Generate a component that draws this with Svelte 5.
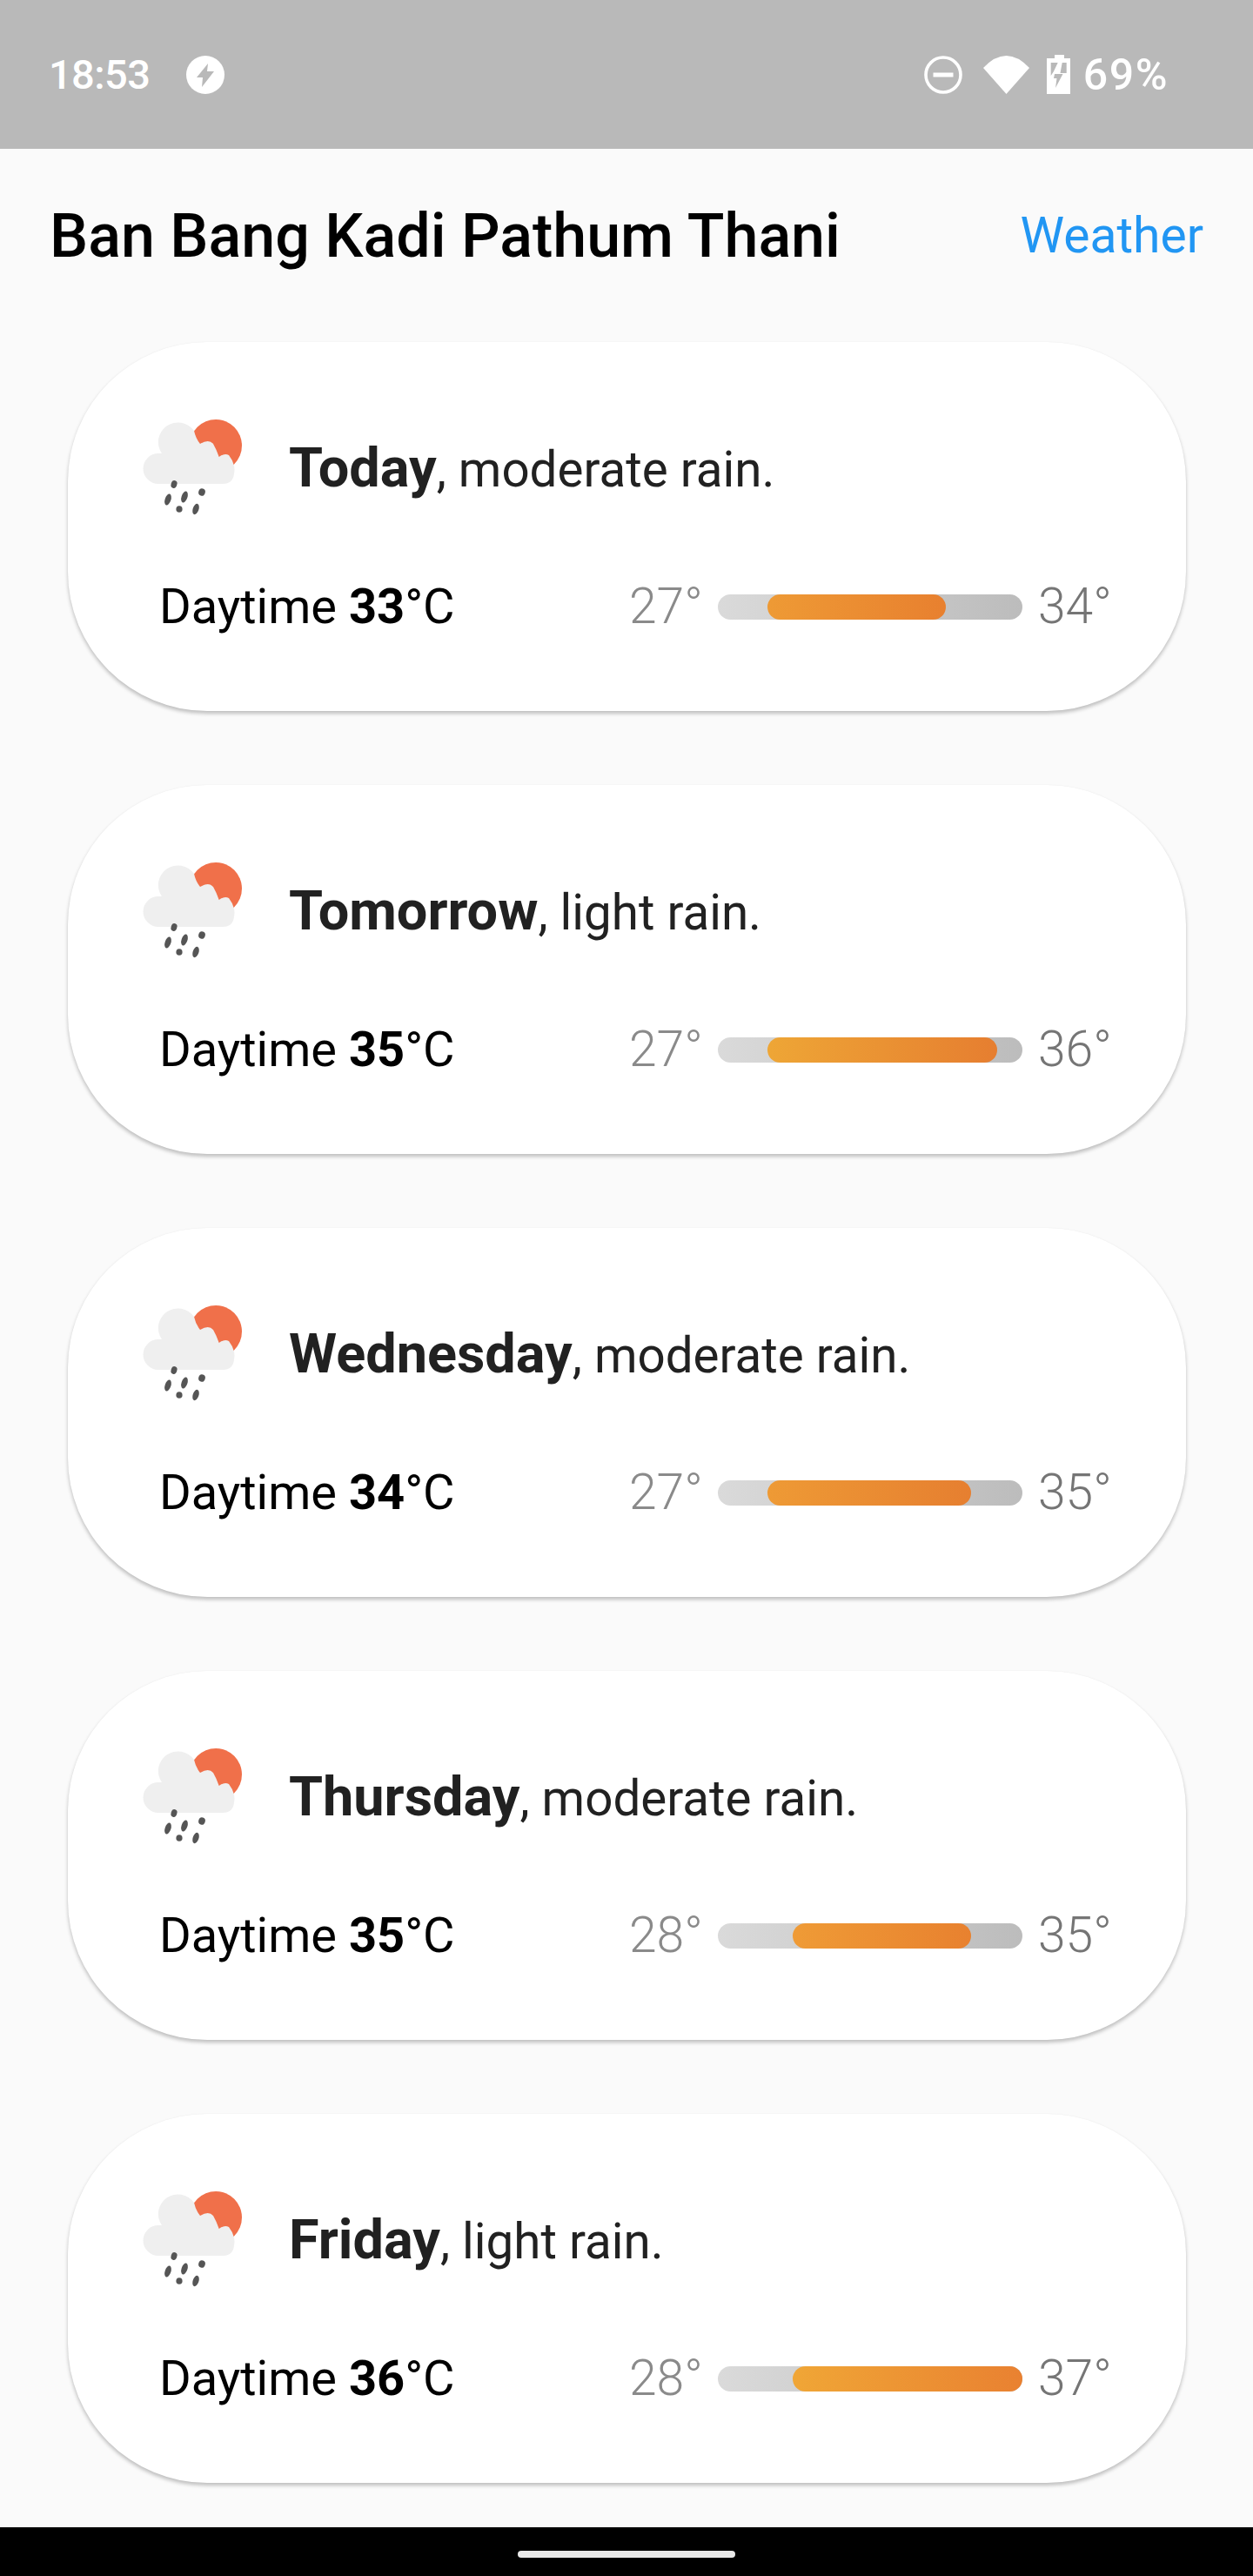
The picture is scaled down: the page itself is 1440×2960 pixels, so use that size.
<script>
  const days = [
    { name: 'Today', desc: ', moderate rain.', day: 33, low: 27, high: 34, from: '#ee9a35', to: '#e8802f' },
    { name: 'Tomorrow', desc: ', light rain.', day: 35, low: 27, high: 36, from: '#eea636', to: '#e67e30' },
    { name: 'Wednesday', desc: ', moderate rain.', day: 34, low: 27, high: 35, from: '#ee9a35', to: '#e67f30' },
    { name: 'Thursday', desc: ', moderate rain.', day: 35, low: 28, high: 35, from: '#ef9b36', to: '#e8812f' },
    { name: 'Friday', desc: ', light rain.', day: 36, low: 28, high: 37, from: '#f0a636', to: '#e98131' }
  ];
  const left = (t) => ((57 + (t - 27) * 29.3) / 350) * 100;
  const right = (t) => ((37 - t) * 29.3 / 350) * 100;
</script>

<div class="screen">
  <header class="status">
    <div class="status-left">
      <span class="time">18:53</span>
      <svg class="amp" viewBox="0 0 44 44" aria-hidden="true">
        <circle cx="22" cy="22" r="22" fill="#fff" />
        <path d="M25 9 L12 25 H19 L18 36 L32 18 H24 Z" fill="#b9b9b9" />
      </svg>
    </div>
    <div class="status-right">
      <svg class="dnd" viewBox="0 0 44 44" aria-hidden="true">
        <circle cx="22" cy="22" r="20" fill="none" stroke="#fff" stroke-width="3.6" />
        <rect x="10.5" y="19.5" width="23" height="5" fill="#fff" />
      </svg>
      <svg class="wifi" viewBox="0 0 53 44" aria-hidden="true">
        <path d="M0 14 Q26.5 -14 53 14 L26.5 44 Z" fill="#fff" />
      </svg>
      <svg class="batt" viewBox="0 0 27 45" aria-hidden="true">
        <path d="M9 0 H20 V4 H27 V45 H0 V4 H9 Z" fill="#fff" />
        <path d="M4.7 9 H12.7 L8 19 L4.7 24 Z M17.7 9 H22.7 V21 H15.5 Z M9 22 H18.5 L10 38 L11.5 27 H8 Z" fill="#b9b9b9" />
      </svg>
      <span class="pct">69%</span>
    </div>
  </header>

  <main class="content">
    <div class="topbar">
      <h1>Ban Bang Kadi Pathum Thani</h1>
      <span class="link">Weather</span>
    </div>

    <div class="cards">
      {#each days as d}
        <section class="card">
          <div class="headline">
            <svg class="wx" viewBox="0 0 122 122" aria-hidden="true">
              <circle cx="88" cy="32" r="30" fill="#f0704a" />
              <path d="M22 76 A17.5 17.5 0 0 1 22 41 L26 41 A21 21 0 0 1 63 15 Q65 24 70 30 Q80 24 85 30 Q89 37 91.7 45 Q98 40 103 43 Q107 48 109 55 Q110 60 109 64 Q108 76 96 76 Z" fill="#efefef" />
              <g fill="#555">
                <ellipse cx="40" cy="76.5" rx="3.4" ry="4.4" transform="rotate(18 40 76.5)" />
                <ellipse cx="33" cy="94" rx="3.4" ry="6.8" transform="rotate(18 33 94)" />
                <ellipse cx="52" cy="91" rx="3.4" ry="6.8" transform="rotate(18 52 91)" />
                <ellipse cx="72" cy="85.5" rx="3.8" ry="4.2" transform="rotate(18 72 85.5)" />
                <ellipse cx="46" cy="105" rx="3.6" ry="3.8" />
                <ellipse cx="65" cy="105" rx="3.4" ry="6.4" transform="rotate(18 65 105)" />
              </g>
            </svg>
            <p class="summary"><strong>{d.name}</strong>{d.desc}</p>
          </div>
          <div class="details">
            <span class="daytime">Daytime <strong>{d.day}</strong>°C</span>
            <div class="range">
              <span class="lo">{d.low}°</span>
              <div class="track">
                <div class="fill" style="left:{left(d.low)}%;right:{right(d.high)}%;background:linear-gradient(90deg,{d.from},{d.to})"></div>
              </div>
              <span class="hi">{d.high}°</span>
            </div>
          </div>
        </section>
      {/each}
    </div>
  </main>

  <footer class="nav"><span class="pill"></span></footer>
</div>

<style>
  :global(body) {
    margin: 0;
  }
  .screen {
    width: 1440px;
    height: 2960px;
    display: flex;
    flex-direction: column;
    background: #fafafa;
    font-family: Roboto, "Liberation Sans", sans-serif;
    overflow: hidden;
  }
  .status {
    height: 171px;
    flex: none;
    background: #b9b9b9;
    color: #fff;
    display: flex;
    justify-content: space-between;
    align-items: center;
    padding: 0 97px 0 56px;
    box-sizing: border-box;
  }
  .status-left,
  .status-right {
    display: flex;
    align-items: center;
  }
  .time {
    font-size: 47px;
    font-weight: 500;
    line-height: 50px;
    letter-spacing: -0.6px;
  }
  .pct {
    font-size: 50px;
    font-weight: 500;
    line-height: 50px;
    letter-spacing: 1.5px;
    margin-left: 15px;
  }
  .amp {
    width: 44px;
    height: 44px;
    margin-left: 42px;
  }
  .dnd {
    width: 44px;
    height: 44px;
  }
  .wifi {
    width: 53px;
    height: 44px;
    margin-left: 24px;
  }
  .batt {
    width: 27px;
    height: 45px;
    margin-left: 20px;
  }
  .content {
    flex: 1;
    min-height: 0;
  }
  .topbar {
    height: 222px;
    box-sizing: border-box;
    padding: 0 57px;
    display: flex;
    justify-content: space-between;
    align-items: flex-start;
  }
  h1 {
    margin: 0;
    padding-top: 58px;
    font-size: 70px;
    line-height: 84px;
    font-weight: 500;
    color: #000;
  }
  .link {
    padding-top: 62px;
    font-size: 57px;
    line-height: 76px;
    font-weight: 400;
    color: #2196f3;
  }
  .cards {
    display: flex;
    flex-direction: column;
    gap: 85px;
    padding: 0 77px 0 78px;
  }
  .card {
    height: 424px;
    box-sizing: border-box;
    background: #fff;
    border-radius: 160px;
    box-shadow: 0 3px 4px rgba(0, 0, 0, 0.24), 0 0 1px rgba(0, 0, 0, 0.05);
    padding: 87px 88px 0 105px;
  }
  .headline {
    display: flex;
    align-items: center;
    height: 122px;
    margin-left: -23px;
  }
  .wx {
    width: 122px;
    height: 122px;
    flex: none;
  }
  .summary {
    margin: 0 0 4px 50px;
    font-size: 56.5px;
    line-height: 64px;
    color: #212121;
    font-weight: 400;
  }
  .summary strong {
    font-size: 63px;
    font-weight: 700;
  }
  .details {
    display: flex;
    align-items: center;
    justify-content: space-between;
    margin-top: 63px;
  }
  .daytime {
    font-size: 56px;
    line-height: 64px;
    color: #000;
  }
  .daytime strong {
    font-weight: 700;
  }
  .range {
    display: flex;
    align-items: center;
    font-size: 57px;
    line-height: 64px;
    font-weight: 300;
    color: #757575;
  }
  .lo {
    color: #8a8a8a;
    width: 102px;
  }
  .hi {
    width: 82px;
    margin-left: 18px;
  }
  .track {
    position: relative;
    width: 350px;
    height: 29px;
    border-radius: 14.5px;
    background: linear-gradient(90deg, #dadada, #bcbcbc);
  }
  .fill {
    position: absolute;
    top: 0;
    bottom: 0;
    border-radius: 14.5px;
  }
  .nav {
    height: 56px;
    flex: none;
    background: #000;
    display: flex;
    justify-content: center;
    padding-top: 27px;
    box-sizing: border-box;
  }
  .pill {
    width: 250px;
    height: 8px;
    border-radius: 4px;
    background: #e8e8e8;
  }
</style>
